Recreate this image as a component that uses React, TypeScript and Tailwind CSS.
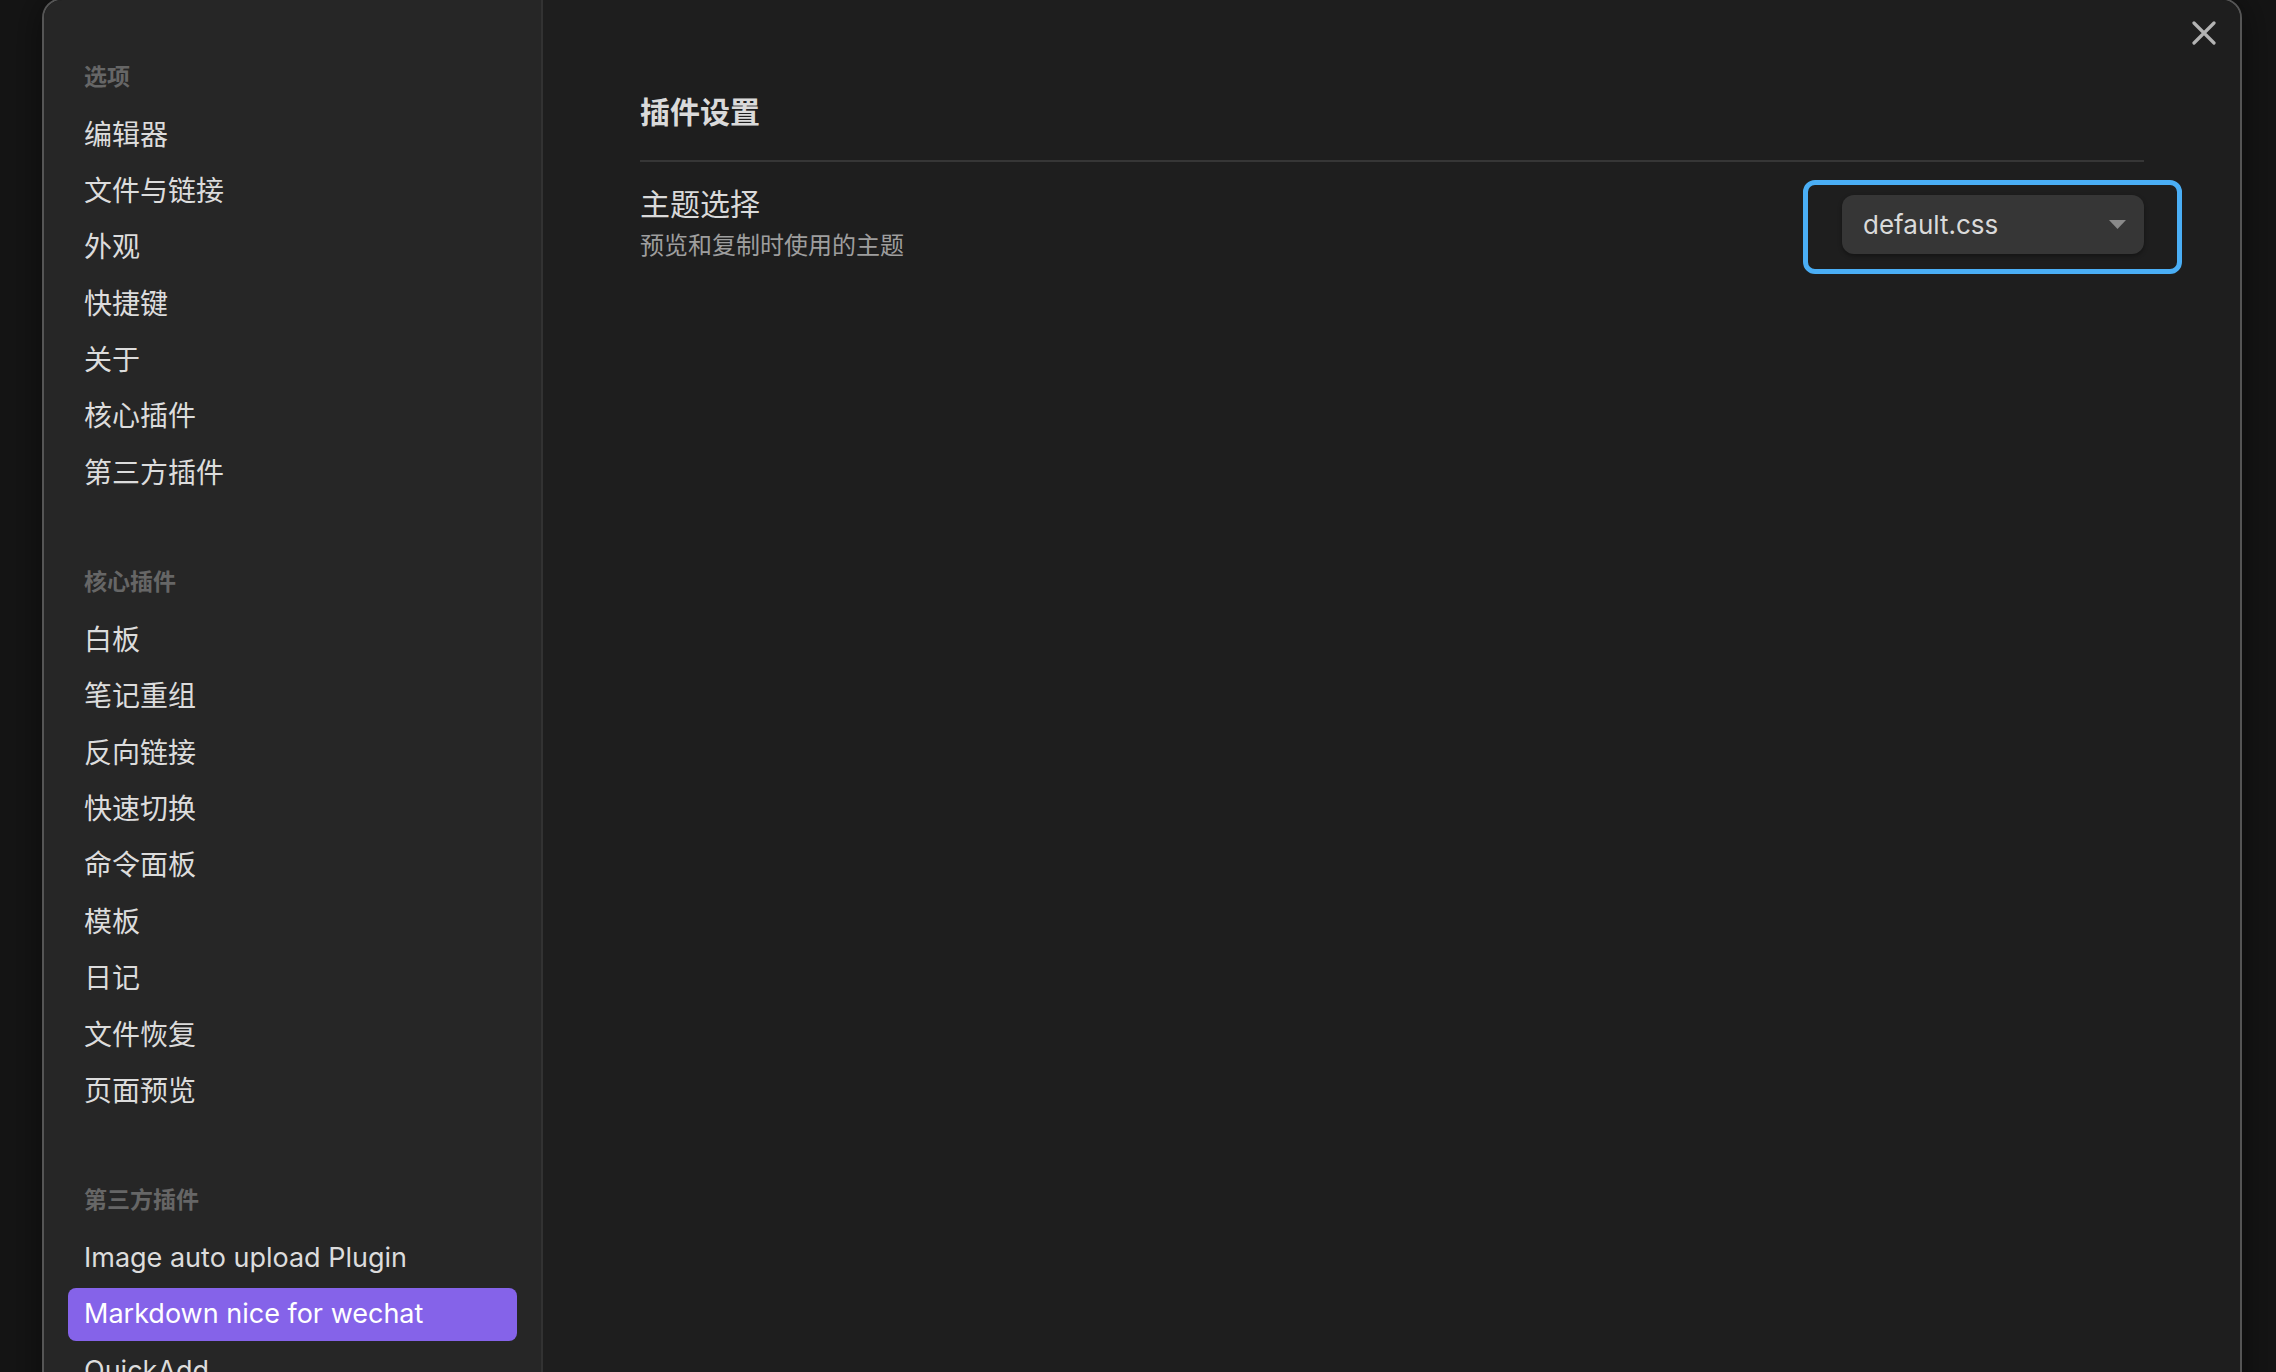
import React from 'react'

const fontStack = { fontFamily: '"Inter", "Noto Sans CJK SC", sans-serif' }

const groups = [
  {
    title: '选项',
    items: ['编辑器', '文件与链接', '外观', '快捷键', '关于', '核心插件', '第三方插件'],
  },
  {
    title: '核心插件',
    items: ['白板', '笔记重组', '反向链接', '快速切换', '命令面板', '模板', '日记', '文件恢复', '页面预览'],
  },
  {
    title: '第三方插件',
    items: ['Image auto upload Plugin', 'Markdown nice for wechat', 'QuickAdd'],
  },
]

const activeItem = 'Markdown nice for wechat'

// latin plugin names render a touch smaller than the CJK ones
const isLatin = (s: string) => /^[\x00-\x7f]+$/.test(s)

function CloseIcon() {
  return (
    <svg width="24" height="24" viewBox="0 0 24 24" fill="none">
      <path d="M2 2L22 22M22 2L2 22" stroke="#b3b3b3" strokeWidth="3.2" strokeLinecap="round" />
    </svg>
  )
}

function Sidebar() {
  return (
    <div className="w-[499px] shrink-0 bg-[#262626] border-r-2 border-[#323232] px-[24px] pt-[57px]">
      {groups.map((group, gi) => (
        <div key={group.title} className={gi > 0 ? 'mt-[63px]' : ''}>
          {/* Section title */}
          <div className="h-[40px] mb-[11px] px-[16px] flex items-center text-[23px] font-semibold text-[#666666]">
            {group.title}
          </div>
          <div className="flex flex-col gap-[3.4px]">
            {group.items.map((item) => (
              <div
                key={item}
                className={
                  (item === activeItem
                    ? 'h-[53px] px-[16px] flex items-center rounded-[8px] bg-[#8563e9] text-white'
                    : 'h-[53px] px-[16px] flex items-center rounded-[8px] text-[#dcdcdc]') +
                  (isLatin(item) ? ' text-[27px]' : ' text-[28px]')
                }
              >
                {item}
              </div>
            ))}
          </div>
        </div>
      ))}
    </div>
  )
}

function ThemeSelect() {
  return (
    <div className="relative">
      {/* Highlight ring around the control */}
      <div className="absolute -left-[39px] -right-[38px] -top-[15px] -bottom-[20px] border-[5px] border-[#4aaef5] rounded-[12px]" />
      <div className="w-[302px] h-[59px] rounded-[12px] bg-[#363636] shadow-[0_2px_4px_rgba(0,0,0,0.35)] flex items-center justify-between pl-[21px] pr-[18px]">
        <span className="text-[26px] text-[#dadada]">default.css</span>
        <svg width="17" height="9" viewBox="0 0 17 9">
          <path d="M0 0H17L8.5 9Z" fill="#8a8a8a" />
        </svg>
      </div>
    </div>
  )
}

function PluginSettings() {
  return (
    <div className="flex-1 bg-[#1e1e1e] pl-[97px] pr-[96px] pt-[92px]">
      <h2 className="h-[40px] leading-[40px] text-[30px] font-bold text-[#dadada]">插件设置</h2>
      <div className="mt-[28px] border-b-2 border-[#363636]" />

      {/* Theme setting */}
      <div className="pt-[24px] flex items-center justify-between">
        <div>
          <div className="leading-[36px] text-[30px] text-[#dadada]">主题选择</div>
          <div className="mt-[8px] leading-[32px] text-[24px] text-[#9e9e9e]">预览和复制时使用的主题</div>
        </div>
        <ThemeSelect />
      </div>
    </div>
  )
}

export default function App() {
  return (
    <div className="w-[2276px] h-[1372px] overflow-hidden bg-[#151515]" style={fontStack}>
      <div className="relative ml-[42px] -mt-[2px] w-[2200px] h-[1420px] flex rounded-[20px] border-2 border-[#555555] overflow-hidden shadow-[0_0_40px_rgba(0,0,0,0.5)]">
        <Sidebar />
        <PluginSettings />
        <button className="absolute top-[21px] right-[24px]">
          <CloseIcon />
        </button>
      </div>
    </div>
  )
}
